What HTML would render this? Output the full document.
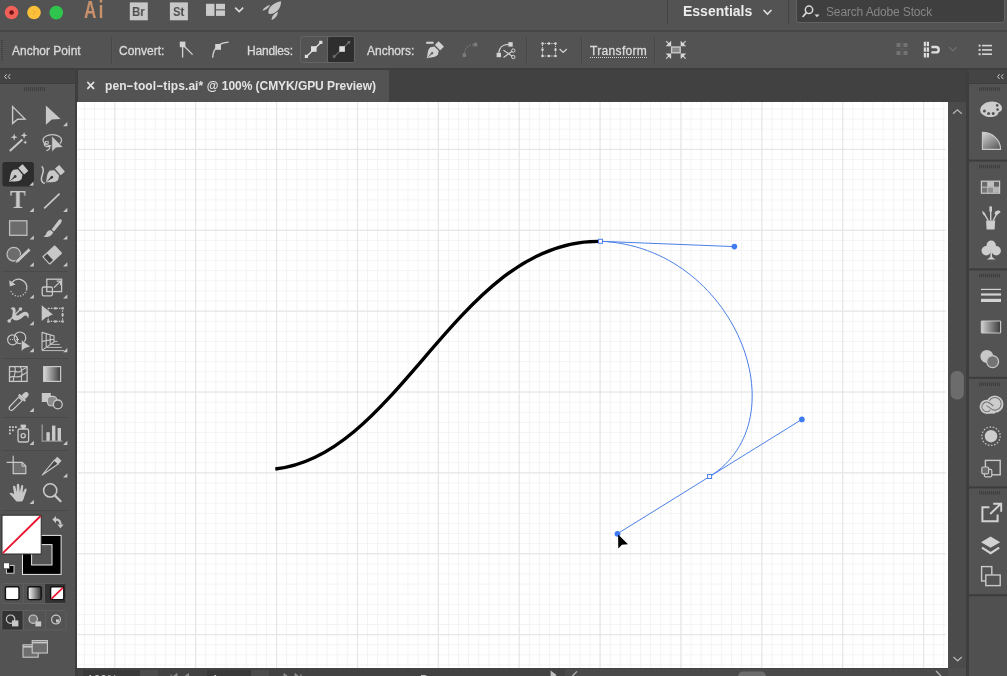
<!DOCTYPE html>
<html>
<head>
<meta charset="utf-8">
<title>pen-tool-tips.ai</title>
<style>
*{box-sizing:border-box;margin:0;padding:0}
html,body{width:1007px;height:676px;overflow:hidden;background:#535353;font-family:"Liberation Sans",sans-serif;color:#dcdcdc}
.abs{position:absolute}
#app{position:relative;width:1007px;height:676px;overflow:hidden;background:#3e3e3e}
#topbar{left:0;top:0;width:1007px;height:30px;background:#535353}
#ctrlbar{left:0;top:31px;width:1007px;height:37.3px;background:#535353}
#sep1{left:0;top:29.9px;width:1007px;height:2.5px;background:linear-gradient(#4c4c4c,#434343 40%,#444 60%,#4e4e4e)}
#tabbar{left:77.5px;top:69.5px;width:888.5px;height:32.5px;background:#414141}
#tab{left:0;top:0;width:311.5px;height:32.5px;background:#535353}
#toolhead{left:0;top:69.5px;width:74.5px;height:13px;background:#434343}
#tools{left:0;top:83.6px;width:74.5px;height:593px;background:#535353}
#rphead{left:969px;top:70px;width:38px;height:12.5px;background:#444}
#rpanel{left:969px;top:84px;width:38px;height:592px;background:#535353}
#canvas{left:77.4px;top:102px;width:870.6px;height:566px;background:#fff;overflow:hidden}
#vscroll{left:948px;top:102px;width:18px;height:566px;background:#4b4b4b}
#status{left:78px;top:668px;width:888px;height:8px;background:#424242}
.t{position:absolute;white-space:nowrap;line-height:1}
svg{position:absolute;overflow:visible}
.lbl{font-size:12px;color:#dadada;-webkit-text-stroke:0.3px #dadada}
.t{will-change:transform}
.hy{display:inline-block;transform:scaleX(1.8);margin:0 1.6px}
</style>
</head>
<body>
<div id="app">
<!-- TOPBAR -->
<div id="topbar" class="abs">
<svg width="300" height="29" style="left:0;top:0">
<circle cx="11.6" cy="12.5" r="6.8" fill="#f2605a"/><circle cx="11.6" cy="12.5" r="2.3" fill="#6e1210"/>
<circle cx="34" cy="12.5" r="6.8" fill="#fbc03a"/><path d="M33 10.4L35.2 12.6L33 14.8" stroke="#e0a22c" stroke-width="1" fill="none"/>
<circle cx="56.3" cy="12.6" r="6.8" fill="#2fc44e"/>
<rect x="129.8" y="2.4" width="18" height="17.9" fill="#c8c8c8"/>
<rect x="169.9" y="2.4" width="18" height="17.9" fill="#c8c8c8"/>
<rect x="206" y="3.8" width="8.5" height="12.1" fill="#cacaca"/><rect x="216" y="3.8" width="9" height="5.5" fill="#cacaca"/><rect x="216" y="10.4" width="9" height="5.5" fill="#cacaca"/>
<path d="M235.2 7.6L239.2 11.6L243.2 7.6" stroke="#dcdcdc" stroke-width="1.6" fill="none"/>
<g fill="#c6c6c6"><path d="M281 1.2C274.5 2 267 7.5 268.6 13.8C274.5 15 281.5 9 281 1.2Z"/><path d="M270.2 5C266.5 5.8 263.5 8.2 262.4 10.6C265 10.6 268.5 8.5 270.2 5Z"/><path d="M278 11.8C274 13.5 271.5 16.5 271.6 20C275 18.8 277.8 15.5 278 11.8Z"/></g>
</svg>
<div class="t" style="left:84px;top:-1.6px;font-size:24.5px;font-weight:bold;color:#c9916c;letter-spacing:3.4px;transform:scaleX(0.7);transform-origin:left top">Ai</div>
<div class="t" style="left:132.3px;top:6px;font-size:12.5px;font-weight:bold;color:#4e4e4e;transform:scaleX(0.92);transform-origin:left top">Br</div>
<div class="t" style="left:173.3px;top:6px;font-size:12.5px;font-weight:bold;color:#4e4e4e;transform:scaleX(0.9);transform-origin:left top">St</div>
<div class="abs" style="left:667px;top:0;width:1px;height:24px;background:#434343"></div><div class="abs" style="left:668px;top:0;width:1px;height:24px;background:#525252"></div>
<div class="abs" style="left:788px;top:0;width:1px;height:24px;background:#434343"></div><div class="abs" style="left:789px;top:0;width:1px;height:24px;background:#525252"></div>
<div class="t" style="left:682.8px;top:4px;font-size:14px;font-weight:bold;color:#ececec">Essentials</div>
<svg width="12" height="8" style="left:762px;top:8px"><path d="M1.5 2L5.5 6L9.5 2" stroke="#e0e0e0" stroke-width="1.6" fill="none"/></svg>
<div class="abs" style="left:796px;top:-3px;width:209px;height:26px;background:#3f3f3f;border:1px solid #626262;border-radius:3px"></div>
<svg width="24" height="22" style="left:800px;top:0"><circle cx="9" cy="9.8" r="3.7" stroke="#d8d8d8" stroke-width="1.5" fill="none"/><path d="M6.4 12.6L2.6 17" stroke="#d8d8d8" stroke-width="1.7" fill="none"/><path d="M14.5 14.5H19.5L17 17.2Z" fill="#d8d8d8"/></svg>
<div class="t" style="left:826px;top:5.5px;font-size:12px;color:#868686;letter-spacing:-0.15px">Search Adobe Stock</div>
</div>
<!-- CTRLBAR -->
<div id="ctrlbar" class="abs">
<svg width="1007" height="37" viewBox="0 31 1007 37" style="left:0;top:0">
<defs>
<g id="pen3"><path d="M0 0C-1.4 -3.4 -6.6 -6.5 -6.2 -11.2L-3.6 -14.8H3.6L6.2 -11.2C6.6 -6.5 1.4 -3.4 0 0Z"/><path d="M0 -0.6L-0.9 -7.6H0.9Z" fill="#666"/><circle cx="0" cy="-8.2" r="1.4" fill="#666"/><rect x="-4.4" y="-21.8" width="8.8" height="5.6" rx="0.5"/></g>
</defs>
<g fill="#3f3f3f"><rect x="1.2" y="40" width="1.8" height="1"/><rect x="1.2" y="42" width="1.8" height="1"/><rect x="1.2" y="44" width="1.8" height="1"/><rect x="1.2" y="46" width="1.8" height="1"/><rect x="1.2" y="48" width="1.8" height="1"/><rect x="1.2" y="50" width="1.8" height="1"/><rect x="1.2" y="52" width="1.8" height="1"/><rect x="1.2" y="54" width="1.8" height="1"/><rect x="1.2" y="56" width="1.8" height="1"/><rect x="1.2" y="58" width="1.8" height="1"/><rect x="1.2" y="60" width="1.8" height="1"/></g>
<g stroke="#474747" stroke-width="1"><path d="M111.5 37V63M526.5 37V63M581.5 37V63M654.5 37V63"/></g>
<g stroke="#565656" stroke-width="1"><path d="M112.5 37V63M527.5 37V63M582.5 37V63M655.5 37V63"/></g>
<!-- convert icons -->
<g fill="#d4d4d4" stroke="#d4d4d4"><rect x="179.8" y="41.6" width="5.6" height="5.6" stroke="none"/><path d="M182.6 47V57.5M184.5 46.5L192.6 54.6" stroke-width="1.3" fill="none"/>
<rect x="215.2" y="44" width="5.8" height="5.8" stroke="none"/><path d="M212.6 57.6C213.5 48 218 42.8 228.6 42.2" stroke-width="1.3" fill="none"/></g>
<!-- handles buttons -->
<rect x="300.5" y="36.5" width="54" height="26" rx="2.5" fill="#535353" stroke="#646464"/>
<rect x="328" y="37" width="26" height="25" rx="1.5" fill="#2e2e2e"/>
<path d="M327.5 37V62" stroke="#646464"/>
<g fill="#dedede"><path d="M306.5 56.5L320.8 42.4" stroke="#dedede" stroke-width="1.4"/><rect x="311" y="46.2" width="5.6" height="5.6"/><rect x="304.8" y="54.8" width="3.2" height="3.2"/><rect x="319.2" y="40.8" width="3.2" height="3.2"/></g>
<g fill="#dedede"><path d="M334 56.8L349 42.2" stroke="#6e6e6e" stroke-width="1.1"/><rect x="339.3" y="46.2" width="5.6" height="5.6"/><rect x="332.8" y="55.2" width="2.6" height="2.6" fill="#6e6e6e"/><rect x="347.6" y="41" width="2.6" height="2.6" fill="#6e6e6e"/></g>
<!-- anchors icons -->
<g fill="#d0d0d0" transform="translate(426.6 58.6) rotate(45) scale(0.86 0.95)"><use href="#pen3"/></g>
<rect x="426.2" y="41.7" width="7.4" height="2.1" fill="#d0d0d0"/>
<g fill="#7c7c7c"><rect x="473.6" y="42.8" width="3.6" height="3.6"/><rect x="462.5" y="53.3" width="3.6" height="3.6"/><path d="M464.6 52.5C465 48 468.5 45 473 44.7" stroke="#7c7c7c" stroke-width="1.2" stroke-dasharray="1.3 1.6" fill="none"/></g>
<g fill="#d4d4d4"><rect x="508.3" y="42.2" width="4.4" height="4.4"/><rect x="496.6" y="52.8" width="4.4" height="4.4"/><path d="M498.8 52.8C499 47.5 503 44.6 508.3 44.4" stroke="#d4d4d4" stroke-width="1.3" fill="none"/>
<path d="M503.5 50.2L512.2 56.2M503.5 57.5L512.2 51.2" stroke="#d4d4d4" stroke-width="1.1"/><circle cx="513.3" cy="50.6" r="1.7" fill="none" stroke="#d4d4d4" stroke-width="1"/><circle cx="513.3" cy="57" r="1.7" fill="none" stroke="#d4d4d4" stroke-width="1"/></g>
<!-- selection box -->
<rect x="542.5" y="43.5" width="13" height="12.5" fill="none" stroke="#cfcfcf" stroke-width="1" stroke-dasharray="1.2 1"/>
<g fill="#dcdcdc"><rect x="541.4" y="42.4" width="2.2" height="2.2"/><rect x="547.9" y="42.4" width="2.2" height="2.2"/><rect x="554.4" y="42.4" width="2.2" height="2.2"/><rect x="541.4" y="48.6" width="2.2" height="2.2"/><rect x="554.4" y="48.6" width="2.2" height="2.2"/><rect x="541.4" y="54.9" width="2.2" height="2.2"/><rect x="547.9" y="54.9" width="2.2" height="2.2"/><rect x="554.4" y="54.9" width="2.2" height="2.2"/></g>
<path d="M559.6 49L563.2 52.4L566.8 49" stroke="#d4d4d4" stroke-width="1.2" fill="none"/>
<!-- transform underline -->
<path d="M590 57.5H647" stroke="#cfcfcf" stroke-width="1" stroke-dasharray="1 1"/>
<!-- isolate icon -->
<rect x="671.6" y="47" width="8.6" height="5.8" fill="#8a8a8a" stroke="#cdcdcd" stroke-width="1.3"/>
<g fill="#d8d8d8" stroke="#d8d8d8" stroke-width="1.1"><path d="M670.6 42.2V45.8H667Z M666.2 41.2L669.4 44.4" /><path d="M681.2 42.2V45.8H684.8Z M685.6 41.2L682.4 44.4"/><path d="M670.6 57.6V54H667Z M666.2 58.6L669.4 55.4"/><path d="M681.2 57.6V54H684.8Z M685.6 58.6L682.4 55.4"/></g>
<!-- right icons -->
<g fill="#737373"><rect x="896.5" y="43" width="4" height="4"/><rect x="903.5" y="43" width="4" height="4"/><rect x="896.5" y="51" width="4" height="4"/><rect x="903.5" y="51" width="4" height="4"/><path d="M902 41.5V57M894.5 49H910" stroke="#606060" stroke-width="0.8"/></g>
<g fill="#dedede"><rect x="923.8" y="41.8" width="5.2" height="4.4"/><rect x="923.8" y="47.4" width="5.2" height="4.4"/><rect x="923.8" y="53" width="5.2" height="4.4"/><path d="M931.4 47H936A2.7 2.7 0 0 1 936 52.4H931.4" stroke="#dedede" stroke-width="2.4" fill="none"/></g>
<path d="M926.4 41.8V57.4" stroke="#535353" stroke-width="0.8"/>
<path d="M949 47.2L952.8 50.8L956.6 47.2" stroke="#747474" stroke-width="1.1" fill="none"/>
<g fill="#d6d6d6"><rect x="978.6" y="44.6" width="2" height="2"/><rect x="978.6" y="48.9" width="2" height="2"/><rect x="978.6" y="53.2" width="2" height="2"/><rect x="982" y="44.8" width="10" height="1.6"/><rect x="982" y="49.1" width="10" height="1.6"/><rect x="982" y="53.4" width="10" height="1.6"/></g>
</svg>
<div class="t lbl" style="left:12px;top:13.5px">Anchor Point</div>
<div class="t lbl" style="left:118.5px;top:13.5px">Convert:</div>
<div class="t lbl" style="left:247px;top:13.5px;letter-spacing:-0.2px">Handles:</div>
<div class="t lbl" style="left:366.5px;top:13.5px">Anchors:</div>
<div class="t lbl" style="left:590px;top:13.5px;letter-spacing:0.33px">Transform</div>
</div>
<div id="sep1" class="abs"></div>
<!-- TABBAR -->
<div id="tabbar" class="abs"><div id="tab" class="abs"><div class="t" style="left:8.4px;top:8px;font-size:16px;color:#e6e6e6;-webkit-text-stroke:0.4px #e6e6e6">×</div><div class="t" style="left:27.6px;top:10px;font-size:12px;font-weight:bold;color:#e4e4e4"><span style="letter-spacing:0.07px">pen<span class="hy">-</span>tool<span class="hy">-</span>tips.ai* @ </span><span style="letter-spacing:-0.06px">100% (CMYK/GPU Preview)</span></div></div></div>
<!-- TOOLS -->
<div id="toolhead" class="abs"><svg width="12" height="9" style="left:3px;top:2px"><path d="M3.6 2.2L1.6 4.6L3.6 7M7.2 2.2L5.2 4.6L7.2 7" stroke="#c8c8c8" stroke-width="1" fill="none"/></svg></div>
<div id="tools" class="abs">
<svg width="74" height="592" viewBox="0 84 74 592" style="left:0;top:0.4px">
<defs>
<g id="pen2"><path d="M0 0C-1.4 -3.4 -6.6 -6.5 -6.2 -11.2L-3.6 -14.8H3.6L6.2 -11.2C6.6 -6.5 1.4 -3.4 0 0Z"/><path d="M0 -0.6L-0.9 -7.6H0.9Z" fill="#3a3a3a"/><circle cx="0" cy="-8.2" r="1.4" fill="#3a3a3a"/><rect x="-4.4" y="-21.8" width="8.8" height="5.6" rx="0.5"/></g>
<path id="fly" d="M0.3 0V-4.2L-3.9 0Z"/>
<linearGradient id="gr1" x1="0" x2="1" y1="0" y2="0"><stop offset="0" stop-color="#dcdcdc"/><stop offset="1" stop-color="#3c3c3c"/></linearGradient>
<linearGradient id="gr2" x1="0" x2="1" y1="0" y2="0"><stop offset="0" stop-color="#ffffff"/><stop offset="1" stop-color="#333333"/></linearGradient>
</defs>
<!-- gripper -->
<g fill="#3f3f3f"><rect x="24" y="87" width="1" height="4"/><rect x="26" y="87" width="1" height="4"/><rect x="28" y="87" width="1" height="4"/><rect x="30" y="87" width="1" height="4"/><rect x="32" y="87" width="1" height="4"/><rect x="34" y="87" width="1" height="4"/><rect x="36" y="87" width="1" height="4"/><rect x="38" y="87" width="1" height="4"/><rect x="40" y="87" width="1" height="4"/><rect x="42" y="87" width="1" height="4"/><rect x="44" y="87" width="1" height="4"/></g>
<!-- separators -->
<g stroke="#4a4a4a" stroke-width="1"><path d="M2 271.5H68M2 358.5H68M2 417.5H68M2 450.5H68M2 510.5H68"/></g>
<!-- flyout triangles -->
<g fill="#c8c8c8">
<use href="#fly" x="67" y="126.2"/><use href="#fly" x="33.5" y="212"/><use href="#fly" x="67" y="212"/>
<use href="#fly" x="33.5" y="239.6"/><use href="#fly" x="67" y="239.6"/><use href="#fly" x="33.5" y="266.5"/><use href="#fly" x="67" y="266.5"/>
<use href="#fly" x="33.5" y="298.6"/><use href="#fly" x="67" y="298.6"/><use href="#fly" x="33.5" y="325.2"/>
<use href="#fly" x="33.5" y="352.2"/><use href="#fly" x="67" y="352.2"/><use href="#fly" x="33.5" y="412"/>
<use href="#fly" x="33.5" y="445"/><use href="#fly" x="67" y="445"/><use href="#fly" x="67" y="477.5"/><use href="#fly" x="33.5" y="504"/>
</g>
<!-- row1 selection -->
<path d="M12.6 106.6V123.4L17.6 119.2L25 119Z" fill="none" stroke="#c8c8c8" stroke-width="1.4" stroke-linejoin="miter"/>
<path d="M45.9 105.4V124.8L51.8 119.6L60.6 119Z" fill="#c8c8c8"/>
<!-- row2 wand / lasso -->
<g fill="#c8c8c8" stroke="none"><path d="M9.8 151L22.4 139.6" stroke="#c8c8c8" stroke-width="2"/>
<path d="M14.2 133.6L15.1 136.3L17.8 137.2L15.1 138.1L14.2 140.8L13.3 138.1L10.6 137.2L13.3 136.3Z"/><path d="M24.1 132L25 134.5L27.5 135.3L25 136.2L24.1 138.7L23.2 136.2L20.7 135.3L23.2 134.5Z"/><path d="M25.2 140.2L25.8 141.7L27.3 142.3L25.8 142.9L25.2 144.4L24.6 142.9L23.1 142.3L24.6 141.7Z"/></g>
<g fill="none" stroke="#c8c8c8" stroke-width="1.2"><ellipse cx="52.3" cy="140.2" rx="9.3" ry="5.6"/><path d="M44.5 143.5C43.5 146 47 147.5 49.5 146.2C50.5 148 49 150 46.4 150.6"/><rect x="45.6" y="141.4" width="2.6" height="2.4" stroke-width="0.9"/></g>
<path d="M51.7 135.8V152L55.8 148L63.2 147.3Z" fill="#c8c8c8" stroke="#535353" stroke-width="0.8"/>
<!-- row3 pen -->
<rect x="2.4" y="162" width="31.5" height="24.4" rx="2.5" fill="#2d2d2d"/>
<g fill="#c8c8c8" transform="translate(9 181.8) rotate(49)"><use href="#pen2"/></g><use href="#fly" x="33.2" y="185.8" fill="#c8c8c8"/>
<g fill="#c8c8c8" transform="translate(45.6 182.6) rotate(49)"><use href="#pen2"/></g>
<path d="M41.6 166.4C46.5 170 40 176 41.5 180.5C42 182.2 43.5 183.2 44.8 183.6" fill="none" stroke="#c8c8c8" stroke-width="1.5"/>
<!-- row4 T / line -->
<path d="M44.2 208.4L59.6 193.6" stroke="#c8c8c8" stroke-width="1.7"/>
<!-- row5 rect / brush -->
<rect x="9.6" y="220.8" width="17.3" height="14.5" fill="#6c6c6c" stroke="#bebebe" stroke-width="1.3"/>
<g fill="#c8c8c8"><path d="M61.3 219.6C60.2 218.8 58.8 219.8 58 221L51.6 229.4L54 231.4L60.6 223.6C61.6 222.4 62.2 220.4 61.3 219.6Z"/><path d="M50.8 230.2C48 230 46.6 232 46.2 233.8C45.8 235.2 44.5 236.2 43 236.6C46.5 237.6 51.5 236.8 53.2 232.2Z"/></g>
<!-- row6 shaper / eraser -->
<circle cx="13.8" cy="254.2" r="6.8" fill="#6c6c6c" stroke="#bebebe" stroke-width="1.3"/>
<g><path d="M28.6 248L31 250.4L18.6 262.2L15 263.6L16.2 259.8Z" fill="#c8c8c8" stroke="#535353" stroke-width="0.8"/></g>
<g transform="translate(52.2 255) rotate(-43)"><rect x="-8.6" y="-5.6" width="17.2" height="11.2" rx="1" fill="#c8c8c8"/><rect x="-7.5" y="-4.3" width="4.6" height="8.6" fill="#454545"/></g>
<!-- row7 rotate / scale -->
<g fill="none" stroke="#c8c8c8"><path d="M12 282.4A8.3 8.3 0 0 1 26.6 289.4" stroke-width="1.5"/><path d="M26.6 289.4A8.3 8.3 0 0 1 10.4 290" stroke-width="1.5" stroke-dasharray="1.1 1.7"/></g>
<path d="M9.2 280.2L9.8 286.6L15.6 284.6Z" fill="#c8c8c8"/>
<g fill="none" stroke="#c8c8c8" stroke-width="1.3"><rect x="46.8" y="279.2" width="14.8" height="12.4"/><rect x="42.2" y="287" width="10.2" height="8.8" rx="1.6"/><path d="M54 287.6L60.2 281.6M56.6 281.2H60.6V285.2"/></g>
<!-- row8 warp / free transform -->
<g fill="#c8c8c8"><path d="M10.5 308.5C13.5 305.5 16.5 308 15.5 312C15 315 17 316.5 19.5 314.5C22 312.5 25 310.5 27.5 312.5C29.5 314.2 28.8 317 28 318.5C27.5 315.5 25.5 314.8 23.5 316.5C21 318.8 17.5 321.5 14 320C11 318.6 12.5 314.5 12.8 312C13 310 12 309 10.5 308.5Z"/><path d="M8.5 321.5L20.5 309" stroke="#c8c8c8" stroke-width="1.3"/><circle cx="9.2" cy="321" r="1.8"/><circle cx="20.5" cy="309" r="1.8"/></g>
<path d="M41.7 305.2V321L45.8 317.4L52.8 314.4Z" fill="#c8c8c8"/>
<rect x="48.2" y="308.4" width="14.4" height="13" fill="none" stroke="#c8c8c8" stroke-width="1.1" stroke-dasharray="1.5 1.2"/>
<g fill="#c8c8c8"><rect x="61.5" y="307.2" width="2.2" height="2.2"/><rect x="61.5" y="313.6" width="2.2" height="2.2"/><rect x="61.5" y="320.4" width="2.2" height="2.2"/><rect x="54.4" y="307.2" width="2.2" height="2.2"/><rect x="54.4" y="320.4" width="2.2" height="2.2"/><rect x="47.2" y="320.4" width="2.2" height="2.2"/></g>
<!-- row9 shape builder / perspective -->
<g fill="none" stroke="#c8c8c8" stroke-width="1.2"><circle cx="12.6" cy="339.8" r="5"/><circle cx="20" cy="337.8" r="5.8"/><path d="M10 339.5H20" stroke-dasharray="1 1" stroke-width="0.9"/></g>
<path d="M21.3 339.8V351.4L24.6 348.6L30.6 346.6Z" fill="#c8c8c8" stroke="#535353" stroke-width="0.7"/>
<g fill="none" stroke="#c8c8c8" stroke-width="1.1"><path d="M42 332V350.6M42 332.4L54 336V342L42 350.4M46.2 333.6V347.4M50.2 334.8V344.6M42 341.4L54 339.2"/><path d="M54 341.4H57.4M51 344.4H59.8M47 347.4H61.8M42 350.6H64" stroke-width="0.9"/></g>
<!-- row10 mesh / gradient -->
<g fill="none" stroke="#c8c8c8" stroke-width="1.1"><rect x="9.5" y="366.6" width="17.6" height="14.8" stroke-width="1.3"/><path d="M9.5 372C14 369.5 17 373.5 20 371.5C23 369.5 24.5 368 27 367.5M9.5 377.5C13 375 17 378.5 21 376C23.5 374.5 25 373 27 372.5M14.5 366.6C17 370 14 375 13 381.4M20 366.6C24 371 20.5 376 21.5 381.4"/></g>
<rect x="43.6" y="366.6" width="17" height="14.8" fill="url(#gr1)" stroke="#c8c8c8" stroke-width="1.2"/>
<!-- row11 eyedropper / blend -->
<g><path d="M9.6 409.6C8.6 408.2 9.2 407 10.2 406L18.8 397.2L22.2 400.6L13.4 409.2C12.4 410.2 11 410.8 9.6 409.6Z" fill="#535353" stroke="#c8c8c8" stroke-width="1.2"/><path d="M18 395.4L24.4 401.8L26 400.2L19.6 393.8Z" fill="#c8c8c8"/><path d="M21.4 395.6L24 393C25.2 391.6 27.2 391.8 28 392.8C29 393.8 28.8 395.6 27.6 396.8L25 399.2Z" fill="#c8c8c8"/></g>
<g><rect x="41.8" y="393" width="9" height="9" fill="#c8c8c8"/><rect x="47.4" y="396.4" width="9.4" height="9.4" rx="3.6" fill="#8c8c8c" stroke="#c8c8c8" stroke-width="1.1"/><circle cx="57.8" cy="404.4" r="4.4" fill="#535353" stroke="#c8c8c8" stroke-width="1.3"/></g>
<!-- row12 sprayer / graph -->
<g fill="#c8c8c8"><rect x="9" y="426.2" width="1.8" height="1.8"/><rect x="12" y="426.2" width="1.8" height="1.8"/><rect x="15" y="426.2" width="1.8" height="1.8"/><rect x="9" y="429.4" width="1.8" height="1.8"/><rect x="12" y="429.4" width="1.8" height="1.8"/><rect x="9" y="432.6" width="1.8" height="1.8"/><rect x="20.6" y="424.6" width="5.4" height="3"/><rect x="21.8" y="427" width="3" height="2.2"/></g>
<rect x="18" y="429" width="10.6" height="13" rx="1.8" fill="none" stroke="#c8c8c8" stroke-width="1.3"/><circle cx="23.2" cy="435.8" r="2.1" fill="none" stroke="#c8c8c8" stroke-width="1.3"/>
<g fill="#c8c8c8"><path d="M42.2 424.6V441.2H62.4" fill="none" stroke="#9a9a9a" stroke-width="1.3"/><rect x="46.4" y="432.2" width="3.4" height="8.6"/><rect x="52" y="425.6" width="3.4" height="15.2"/><rect x="57.6" y="428" width="3.4" height="12.8"/></g>
<!-- row13 artboard / slice -->
<path d="M13.2 462.4H22.2L25.8 466V473.6H13.2Z" fill="#6e6e6e" stroke="#c8c8c8" stroke-width="1.2"/><path d="M22 462.4V466.2H25.8" fill="none" stroke="#c8c8c8" stroke-width="1"/>
<path d="M13.2 455.8V462.4M6.6 462.4H13.2" stroke="#c8c8c8" stroke-width="1.2"/>
<path d="M42.2 475L54.4 460.2L58.4 463.8Z" fill="#464646" stroke="#c8c8c8" stroke-width="1.1" stroke-linejoin="round"/><path d="M54 460.4L57.2 456.8L61.6 460.8L58.4 464.2Z" fill="#c8c8c8"/>
<!-- row14 hand / zoom -->
<path d="M16.6 501.6C14.6 500 12.6 496 9.4 493.4C10.6 492 12.6 492.8 14.2 494.6L13 487C13 485.4 15 485.2 15.4 486.8L16.8 492.4L16.8 485C17 483.4 19 483.4 19.2 485L19.8 492.2L21.2 485.8C21.6 484.4 23.4 484.8 23.2 486.2L22.6 493L24.6 489.2C25.4 488 27 488.8 26.6 490.2L24.2 497C23.6 499 23 500.6 21.8 501.6Z" fill="#c8c8c8"/>
<circle cx="50.2" cy="490.4" r="6.6" fill="none" stroke="#c8c8c8" stroke-width="1.6"/><path d="M54.8 495.4L60.6 501.2" stroke="#c8c8c8" stroke-width="2.2" stroke-linecap="round"/>
<!-- fill/stroke -->
<rect x="22.5" y="535.4" width="38.6" height="39" fill="#000" stroke="#e8e8e8" stroke-width="1"/>
<rect x="31.6" y="544.6" width="20.4" height="20.4" fill="#535353" stroke="#e8e8e8" stroke-width="1"/>
<rect x="2" y="515.2" width="39.2" height="38.8" fill="#fff" stroke="#2c2c2c" stroke-width="1"/>
<path d="M2.8 553.2L40.6 516" stroke="#e8132a" stroke-width="1.8"/>
<g fill="#c8c8c8"><path d="M52.4 519.6L56 516V518.4C60 518.4 61.6 521 61.6 524.6H59.4C59.4 522 58.6 520.8 56 520.8V523.2Z"/><path d="M57.4 524.4H63.6L60.5 528.2Z"/></g>
<rect x="6.4" y="565.4" width="7.6" height="7.8" fill="#000" stroke="#dcdcdc" stroke-width="0.9"/><rect x="3.6" y="562.8" width="6" height="6" fill="#fff" stroke="#3a3a3a" stroke-width="0.8"/>
<!-- colour modes -->
<rect x="1.5" y="583.5" width="64.5" height="20" rx="2" fill="none" stroke="#5e5e5e"/>
<rect x="45" y="584" width="20.5" height="19" fill="#333"/>
<path d="M23.5 584V603M44.5 584V603" stroke="#5e5e5e"/>
<rect x="5.4" y="586.8" width="13.6" height="12.8" rx="1.6" fill="#fff" stroke="#111" stroke-width="1.4"/>
<rect x="28" y="586.8" width="13.2" height="12.8" rx="1.6" fill="url(#gr2)" stroke="#111" stroke-width="1.4"/>
<rect x="50.6" y="586.8" width="13.2" height="12.8" rx="1.6" fill="#fff" stroke="#111" stroke-width="1.4"/><path d="M51.4 598.8L63 587.6" stroke="#e8132a" stroke-width="1.6"/>
<!-- draw modes -->
<rect x="1.5" y="610.5" width="64.5" height="19.5" rx="2" fill="none" stroke="#5e5e5e"/>
<rect x="2.4" y="611" width="20" height="18.5" fill="#333"/>
<path d="M23.5 611V629.5M45.5 611V629.5" stroke="#5e5e5e"/>
<g fill="none" stroke="#c8c8c8" stroke-width="1.2"><circle cx="10.6" cy="619.2" r="4.2"/><circle cx="33.2" cy="619.2" r="4.2" fill="#777"/><circle cx="56" cy="619.6" r="4.4"/></g>
<g fill="#c8c8c8"><rect x="12" y="620.4" width="6.4" height="6"/><rect x="35.4" y="621.4" width="5.8" height="5"/><rect x="56" y="619.4" width="3.2" height="3"/></g>
<!-- screen mode -->
<rect x="23" y="644.8" width="15.2" height="12.4" fill="#6e6e6e" stroke="#c8c8c8" stroke-width="1.1"/><path d="M23 646.8H38.2" stroke="#c8c8c8" stroke-width="1.6"/>
<rect x="32.2" y="640.6" width="15.2" height="12.4" fill="#6e6e6e" stroke="#c8c8c8" stroke-width="1.1"/><path d="M32.2 642.6H47.4" stroke="#c8c8c8" stroke-width="1.6"/>
</svg>
<div class="t" style="left:9.9px;top:104.8px;font-family:'Liberation Serif',serif;font-size:24.7px;font-weight:bold;color:#c8c8c8;transform:scaleX(0.96);transform-origin:left top">T</div>
</div>
<!-- RPANEL -->
<div id="rphead" class="abs"><svg width="12" height="9" style="left:27px;top:2px"><path d="M3.6 2.2L1.6 4.6L3.6 7M7.2 2.2L5.2 4.6L7.2 7" stroke="#c8c8c8" stroke-width="1" fill="none"/></svg></div>
<div id="rpanel" class="abs">
<svg width="38" height="592" viewBox="969 84 38 592" style="left:0;top:0">
<defs>
<pattern id="grip" x="979" y="0" width="2" height="4" patternUnits="userSpaceOnUse"><rect x="0" y="0" width="1.2" height="4" fill="#3e3e3e"/></pattern>
<linearGradient id="rg1" x1="0" x2="1" y1="0" y2="0"><stop offset="0" stop-color="#d0d0d0"/><stop offset="1" stop-color="#3a3a3a"/></linearGradient>
<linearGradient id="rg2" x1="0" y1="0" x2="0.8" y2="1"><stop offset="0" stop-color="#d6d6d6"/><stop offset="1" stop-color="#5e5e5e"/></linearGradient>
</defs>
<rect x="969" y="595" width="38" height="81" fill="#505050"/>
<g fill="#3c3c3c"><rect x="969" y="159.6" width="38" height="2"/><rect x="969" y="268.4" width="38" height="2"/><rect x="969" y="376.8" width="38" height="2"/><rect x="969" y="486.4" width="38" height="2"/><rect x="969" y="594.2" width="38" height="2"/></g>
<g><rect x="979" y="87.2" width="22" height="3.6" fill="url(#grip)"/><rect x="979" y="165" width="22" height="3.4" fill="url(#grip)"/><rect x="979" y="273.8" width="22" height="3.4" fill="url(#grip)"/><rect x="979" y="382.6" width="22" height="3.4" fill="url(#grip)"/><rect x="979" y="491.2" width="22" height="3.4" fill="url(#grip)"/></g>
<!-- palette -->
<path d="M980.2 110.6C980 105.6 985.5 101.6 992 101.6C998 101.6 1002 104.6 1002 108.4C1002 110.6 1000.4 111.4 999.2 112C998 112.6 998.4 114 997 115.2C994.5 117.2 990 117.4 986 116.4C982.6 115.4 980.4 113.4 980.2 110.6Z" fill="#cdcdcd"/>
<g fill="#535353"><circle cx="984.4" cy="111" r="1.5"/><circle cx="988.6" cy="113.4" r="1.5"/><circle cx="993.2" cy="113.4" r="1.5"/><circle cx="997.6" cy="109.6" r="1.3"/><circle cx="997.2" cy="105.4" r="1.3"/></g>
<!-- colour guide -->
<path d="M982.4 132.4A18 17 0 0 1 1000.6 149.4H982.4Z" fill="url(#rg2)" stroke="#c8c8c8" stroke-width="1.1"/>
<!-- swatches -->
<rect x="981.4" y="181.2" width="18.2" height="12" fill="#8a8a8a" stroke="#c8c8c8" stroke-width="1.2"/>
<g><rect x="982.2" y="182" width="5.2" height="4.8" fill="#6a6a6a"/><rect x="988" y="182" width="5.2" height="4.8" fill="#c0c0c0"/><rect x="993.8" y="182" width="5.2" height="4.8" fill="#626262"/><rect x="982.2" y="187.6" width="5.2" height="4.8" fill="#767676"/><rect x="988" y="187.6" width="5.2" height="4.8" fill="#8e8e8e"/><rect x="993.8" y="187.6" width="5.2" height="4.8" fill="#b4b4b4"/><path d="M981.4 187.2H999.6M987.7 181.2V193.2M993.5 181.2V193.2" stroke="#c8c8c8" stroke-width="0.8"/></g>
<!-- brushes -->
<g fill="#cdcdcd"><path d="M986 220.6H995.2L994.6 229.4H986.6Z"/><path d="M987.4 220.6L984.4 215.4L985.6 214.8L989 220.6ZM990 220.6V211H991.4V220.6ZM992.4 220.6L996 214L997.2 214.6L994 220.6Z"/><path d="M982.4 210.6C983.6 212.2 986 213.2 985.8 216.2C984 216 982 214 982.4 210.6Z"/><path d="M989.4 206.4H992V211.6H989.4Z"/><path d="M994.4 213.2C996 210 999.6 210 1000.6 212C999 213 997.6 215.2 996 215.6Z"/></g>
<!-- symbols club -->
<g fill="#cdcdcd"><circle cx="991.2" cy="245.2" r="4.7"/><circle cx="986.2" cy="250.8" r="4.7"/><circle cx="996.2" cy="250.8" r="4.7"/><path d="M990.4 250H992V256.2C992.4 257.6 994 258.6 995.6 259.4H986.8C988.4 258.6 990 257.6 990.4 256.2Z"/></g>
<!-- stroke -->
<g fill="#d2d2d2"><rect x="981" y="288.8" width="20" height="1.2"/><rect x="981" y="293.4" width="20" height="2.2"/><rect x="981" y="298.8" width="20" height="3.2"/></g>
<!-- gradient -->
<rect x="981.4" y="321" width="19.2" height="12" rx="0.8" fill="url(#rg1)" stroke="#c8c8c8" stroke-width="1.2"/>
<!-- transparency -->
<circle cx="986.8" cy="356.4" r="6.4" fill="#c8c8c8"/><circle cx="992.6" cy="361.6" r="6" fill="#747474" stroke="#c8c8c8" stroke-width="1.3"/>
<!-- CC libraries -->
<g fill="#cdcdcd"><circle cx="986.6" cy="406.8" r="7"/><circle cx="994.8" cy="404.2" r="8.6"/><rect x="986" y="409" width="9" height="4.6"/></g>
<g fill="none" stroke="#747474" stroke-width="1.1"><path d="M990.2 410.2A4.8 4.8 0 1 1 989.6 403L993.4 406"/><path d="M989.4 400.8A6.3 6.3 0 1 1 992 409.4L986.6 405.6"/></g>
<!-- appearance -->
<circle cx="991" cy="436.2" r="6.2" fill="#cdcdcd"/><circle cx="991" cy="436.2" r="9.2" fill="none" stroke="#c0c0c0" stroke-width="1.3" stroke-dasharray="1.6 1.6"/>
<!-- graphic styles -->
<rect x="985.4" y="460.4" width="14.8" height="14.4" fill="none" stroke="#c8c8c8" stroke-width="1.4"/>
<rect x="984.4" y="469.4" width="7.4" height="7.4" rx="1.2" fill="#535353" stroke="#c8c8c8" stroke-width="1.2"/><rect x="981.8" y="467" width="6.8" height="6.8" rx="1.2" fill="#6e6e6e" stroke="#c8c8c8" stroke-width="1.2"/>
<!-- asset export -->
<g fill="none" stroke="#d2d2d2" stroke-width="2"><path d="M989.4 507.2H982.4V521.2H997.6V514.4"/><path d="M990.2 514L1000.8 503.8M993.2 503.8H1001.2V511.8" stroke-width="1.9"/></g>
<!-- layers -->
<path d="M990.6 536.6L1000.2 542.2L990.6 547.8L981 542.2Z" fill="#d2d2d2"/><path d="M982 547.6L990.6 553.2L999.2 547.6" fill="none" stroke="#d2d2d2" stroke-width="2.2"/>
<!-- artboards -->
<rect x="981.6" y="566.6" width="10.2" height="14.4" fill="none" stroke="#c8c8c8" stroke-width="1.4"/><rect x="985.8" y="575" width="14.4" height="10.6" fill="#535353" stroke="#c8c8c8" stroke-width="1.4"/>
</svg>
</div>
<!-- CANVAS -->
<div id="canvas" class="abs">
<svg width="870" height="566" viewBox="78 102 870 566" style="left:0.6px;top:0">
<defs>
<pattern id="gmin" x="114.3" y="148.9" width="10.11" height="10.11" patternUnits="userSpaceOnUse"><path d="M0.5 0V10.11M0 0.5H10.11" stroke="#f3f3f3" stroke-width="1" fill="none"/></pattern>
<pattern id="gmaj" x="114.3" y="148.9" width="80.88" height="80.88" patternUnits="userSpaceOnUse"><path d="M0.5 0V80.88M0 0.5H80.88" stroke="#e3e3e3" stroke-width="1" fill="none"/></pattern>
</defs>
<rect x="78" y="102" width="870" height="566" fill="#fff"/>
<rect x="78" y="102" width="870" height="566" fill="url(#gmin)"/>
<rect x="78" y="102" width="870" height="566" fill="url(#gmaj)"/>
<rect x="945.8" y="102" width="2.2" height="566" fill="#fff"/>
<path d="M275.3 469C400.3 455.6 458.8 239 600.3 241.4" fill="none" stroke="#000" stroke-width="3.4"/>
<g stroke="#4a80e8" stroke-width="1" fill="none">
<path d="M600.5 241.3C734.4 246.6 801.9 419.4 709.6 476.5"/>
<path d="M600.5 241.3L734.4 246.6"/>
<path d="M617.6 533.6L801.9 419.4"/>
</g>
<circle cx="734.4" cy="246.6" r="2.8" fill="#3f7cf0"/>
<circle cx="801.9" cy="419.4" r="2.8" fill="#3f7cf0"/>
<circle cx="617.5" cy="533.8" r="2.9" fill="#3f7cf3"/>
<rect x="598.5" y="239.3" width="4" height="4" fill="#fff" stroke="#4a80e8" stroke-width="1"/>
<rect x="707.6" y="474.5" width="4" height="4" fill="#fff" stroke="#4a80e8" stroke-width="1"/>
<path d="M618.1 534.4L618.3 548.4L622 544.7L628 544.2Z" fill="#000"/>
</svg>
</div>
<div id="vscroll" class="abs">
<svg width="18" height="566" viewBox="948 102 18 566" style="left:0;top:0">
<path d="M953 113.8L957.4 109.8L961.8 113.8" fill="none" stroke="#b4b4b4" stroke-width="1.3"/>
<path d="M953.4 657L957.6 660.8L961.8 657" fill="none" stroke="#b4b4b4" stroke-width="1.3"/>
<rect x="950.6" y="371" width="13.2" height="28.5" rx="6" fill="#6c6c6c"/>
</svg>
</div>
<div id="status" class="abs">
<div class="abs" style="left:4.5px;top:2px;width:57px;height:10px;background:#393939"></div>
<div class="abs" style="left:61.5px;top:2px;width:18px;height:10px;background:#4c4c4c"></div>
<div class="abs" style="left:128.5px;top:2px;width:44px;height:10px;background:#393939"></div>
<div class="abs" style="left:172.5px;top:2px;width:18px;height:10px;background:#4c4c4c"></div>
<div class="t" style="left:9px;top:5.6px;font-size:12px;color:#c4c4c4">100%</div>
<div class="t" style="left:134px;top:5.6px;font-size:12px;color:#c4c4c4">1</div>
<div class="t" style="left:342px;top:5.6px;font-size:12px;color:#c4c4c4">Pen</div>
<svg width="888" height="8" viewBox="78 668 888 8" style="left:0;top:0">
<g fill="#808080" transform="translate(0 1)"><path d="M171 673.4V680M172.5 676L177 672.6V680ZM184 676L188.5 672.6V680Z" stroke="#8e8e8e" stroke-width="1"/><path d="M284 672.6L288.5 676V680H284ZM295 672.6L299.5 676V680H295ZM301 673V680" stroke="#8e8e8e" stroke-width="1"/></g>
<rect x="565" y="669" width="383" height="7" fill="#4a4a4a"/>
<rect x="948" y="668" width="18" height="8" fill="#4f4f4f"/>
<path d="M550.6 670.6L556.6 675L550.6 679Z" fill="#c0c0c0"/>
<path d="M577 671.4L572.4 676" stroke="#b4b4b4" stroke-width="1.3" fill="none"/>
<path d="M936 671L941 676" stroke="#b4b4b4" stroke-width="1.3" fill="none"/>
<rect x="738" y="671.6" width="28" height="10" rx="5" fill="#6c6c6c"/>
</svg>
</div>
</div>
</body>
</html>
